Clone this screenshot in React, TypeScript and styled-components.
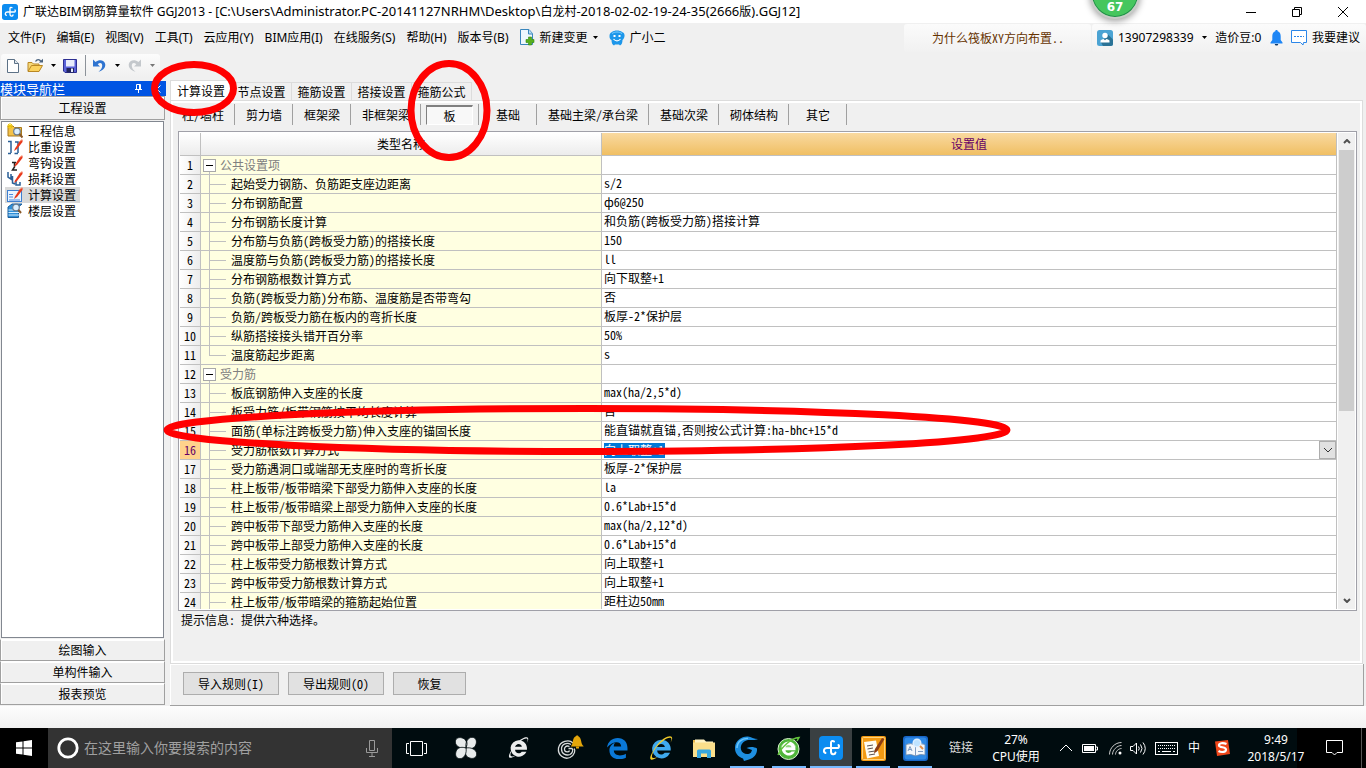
import React from "react";
import styled, { createGlobalStyle, css } from "styled-components";

const SONG = `"Noto Sans Mono CJK SC", "Noto Sans CJK SC", sans-serif`;
const UI = `"Noto Sans", "Noto Sans CJK SC", sans-serif`;

const GlobalStyle = createGlobalStyle`
  *, *::before, *::after { box-sizing: border-box; }
  html, body { margin: 0; padding: 0; background: #f0f0f0; }
  body { overflow: hidden; font-family: ${SONG}; font-size: 12px; line-height: 16px; color: #000; }
  button, input { font: inherit; color: inherit; margin: 0; }
  svg { display: block; flex: none; }
`;

const App_ = styled.div`
  position: relative;
  display: flex;
  flex-direction: column;
  height: 100vh;
  overflow: hidden;
`;

/* ---------- title bar ---------- */
const TitleBar = styled.header`
  display: flex;
  align-items: center;
  height: 23px;
  flex: none;
  padding-left: 2px;
  background: #fff;
  font-family: ${UI};
`;
const Title = styled.h1`
  margin: 0 auto 0 5px;
  font-size: 12px;
  font-weight: 400;
  line-height: 18px;
  white-space: nowrap;
`;
const Path = styled.span`
  font-size: 13px;
`;
const WindowButton = styled.button`
  display: flex;
  align-items: center;
  justify-content: center;
  width: 46px;
  height: 20px;
  padding: 0;
  border: 0;
  background: none;
`;

/* ---------- menu bar ---------- */
const MenuBar = styled.nav`
  display: flex;
  align-items: center;
  height: 29px;
  flex: none;
  font-family: ${UI};
  white-space: nowrap;
`;
const MenuList = styled.div`
  display: flex;
  align-items: center;
  gap: 11px;
  padding-left: 8px;
  margin-right: auto;
`;
const MenuButton = styled.button`
  display: flex;
  align-items: center;
  gap: 5px;
  padding: 0;
  border: 0;
  background: none;
  line-height: 18px;
`;
const SoftStrip = styled.div<{ $width: number }>`
  display: flex;
  align-items: center;
  width: ${(p) => p.$width}px;
  height: 28px;
  margin-left: 1px;
  border-radius: 3px;
  background: linear-gradient(#fbfbfb, #f1f1f1);
`;
const TipLink = styled.a`
  padding-left: 28px;
  font-family: ${SONG};
  color: #663300;
  text-decoration: none;
`;
const AccountStrip = styled(SoftStrip)`
  justify-content: space-between;
  padding: 0 6px 0 5px;
`;

/* ---------- tool bar ---------- */
const ToolRow = styled.div`
  display: flex;
  height: 29px;
  flex: none;
  padding: 2px 0 4px 1px;
`;
const ToolBar = styled.div`
  display: flex;
  align-items: center;
  width: 159px;
  padding-left: 4px;
  border-radius: 3px;
  background: linear-gradient(#fcfcfc, #f0f0f0);
`;
const ToolButton = styled.button<{ $width: number }>`
  display: flex;
  align-items: center;
  justify-content: center;
  flex: none;
  width: ${(p) => p.$width}px;
  height: 22px;
  padding: 0;
  border: 0;
  background: none;
`;
const ToolDivider = styled.span`
  width: 1px;
  height: 21px;
  flex: none;
  margin: 0 3px 0 1px;
  background: #8c9299;
`;

/* ---------- body ---------- */
const Body = styled.main`
  display: flex;
  flex: 1;
  min-height: 0;
`;
const Side = styled.aside`
  display: flex;
  flex-direction: column;
  width: 166px;
  flex: none;
  padding-bottom: 1px;
`;
const SideHeader = styled.div`
  display: flex;
  align-items: center;
  height: 15px;
  flex: none;
  background: #0054e3;
  color: #fff;
  gap: 14px;
  padding-right: 5px;
`;
const SideTitle = styled.h2`
  margin: 0 auto 0 0;
  font-size: 13px;
  font-weight: 400;
  line-height: 15px;
`;
const SideButton = styled.button<{ $tall?: boolean }>`
  width: 165px;
  height: ${(p) => (p.$tall ? 24 : 22)}px;
  flex: none;
  padding: 0;
  border: 1px solid #a0a0a0;
  border-top-color: ${(p) => (p.$tall ? "#a0a0a0" : "#fff")};
  background: #f0f0f0;
  box-shadow: inset 1px 1px 0 #fff;
  line-height: 18px;
`;
const Tree = styled.ul`
  flex: 1;
  min-height: 0;
  width: 163px;
  margin: 1px 0 1px 1px;
  padding: 1px 3px;
  border: 1px solid #828790;
  background: #fff;
  list-style: none;
`;
const TreeItem = styled.li<{ $active?: boolean }>`
  display: flex;
  align-items: center;
  gap: 5px;
  width: 75px;
  height: 16px;
  padding-left: 2px;
  background: ${(p) => (p.$active ? "#d9d9d9" : "none")};
  white-space: nowrap;
`;

const Content = styled.section`
  display: flex;
  flex-direction: column;
  flex: 1;
  min-width: 0;
  margin: 0 2px 0 4px;
`;
const Tabs = styled.div`
  display: flex;
  align-items: flex-end;
  height: 19px;
  flex: none;
`;
const Tab = styled.button<{ $active?: boolean }>`
  width: 60px;
  height: 18px;
  padding: 0;
  border: solid #dcdcdc;
  border-width: 1px 1px 0 0;
  background: #f0f0f0;
  line-height: 17px;
  white-space: nowrap;
  ${(p) =>
    p.$active &&
    css`
      width: 62px;
      height: 20px;
      border-left-width: 1px;
      background: #fff;
    `}
`;
const Pane = styled.div`
  display: flex;
  flex-direction: column;
  flex: 1;
  min-height: 0;
  margin-right: 1px;
  padding: 3px 5px 0 7px;
  border: 1px solid #dcdcdc;
  box-shadow: inset 0 0 0 2px #fff;
`;
const SubTabs = styled.div`
  display: flex;
  height: 21px;
  flex: none;
  margin: 0 0 6px -7px;
`;
const SubTab = styled.button<{ $active?: boolean }>`
  min-width: 58px;
  padding: 0 10px 0 11px;
  border: 0;
  border-right: 1px solid #a0a0a0;
  background: none;
  white-space: nowrap;
  line-height: 20px;
  ${(p) =>
    p.$active &&
    css`
      padding: 0 5px;
    `}
`;
const Pressed = styled.span`
  display: block;
  height: 20px;
  border: 1px solid #fff;
  border-top: 2px solid #808080;
  border-left-color: #808080;
  background: #f8f8f8;
  line-height: 17px;
`;

/* ---------- grid ---------- */
const Grid = styled.div`
  display: flex;
  flex: 1;
  min-height: 0;
  padding: 1px;
  gap: 1px;
  border: 1px solid #a0a0a8;
  background: #fff;
  overflow: hidden;
`;
const TableClip = styled.div`
  flex: 1;
  min-width: 0;
  overflow: hidden;
`;
const Table = styled.table`
  width: 100%;
  table-layout: fixed;
  border-collapse: separate;
  border-spacing: 0;
`;
const HeadCell = styled.th<{ $hot?: boolean }>`
  height: 23px;
  padding: 0;
  border: solid #c0c0c0;
  border-width: 0 1px 1px 0;
  background: ${(p) => (p.$hot ? "linear-gradient(#f9d9a0, #f0bf63)" : "linear-gradient(#fff, #ececec)")};
  color: ${(p) => (p.$hot ? "#660066" : "#000")};
  font-weight: 400;
`;
const cell = css`
  height: 19px;
  padding: 0;
  border: solid #c0c0c0;
  border-width: 0 1px 1px 0;
  line-height: 18px;
  white-space: nowrap;
`;
const NumCell = styled.th<{ $hot?: boolean }>`
  ${cell}
  background: ${(p) => (p.$hot ? "#ffd28c" : "linear-gradient(90deg, #fff, #ececec)")};
  color: ${(p) => (p.$hot ? "#660066" : "#000")};
  font-weight: 400;
  text-align: center;
`;
const NameCell = styled.td<{ $group?: boolean }>`
  ${cell}
  background: #ffffe1;
  ${(p) =>
    p.$group &&
    css`
      color: #808080;
      background: linear-gradient(#c0c0c0, #c0c0c0) 8px 100% / 1px 5px no-repeat #ffffe1;
    `}
`;
const NameRow = styled.div`
  display: flex;
  align-items: center;
  height: 18px;
  padding-left: 2px;
  gap: 4px;
`;
const Expander = styled.button`
  display: flex;
  align-items: center;
  justify-content: center;
  width: 13px;
  height: 13px;
  padding: 0;
  border: 1px solid #a8a8a8;
  background: #fff;
`;
const Branch = styled.span<{ $last?: boolean }>`
  width: 17px;
  height: 18px;
  margin: 0 1px 0 6px;
  background:
    linear-gradient(#c0c0c0, #c0c0c0) 0 0 / 1px ${(p) => (p.$last ? "9px" : "18px")} no-repeat,
    linear-gradient(#c0c0c0, #c0c0c0) 0 9px / 17px 1px no-repeat;
`;
const ValueCell = styled.td`
  ${cell}
  padding-left: 2px;
  line-height: 16px;
  vertical-align: top;
`;
const Editor = styled.div`
  display: flex;
  align-items: center;
  justify-content: space-between;
  height: 18px;
`;
const EditorInput = styled.input`
  width: 61px;
  height: 15px;
  padding: 0;
  border: 0;
  background: #0078d7;
  color: #fff;
`;
const DropButton = styled.button`
  display: flex;
  align-items: center;
  justify-content: center;
  width: 17px;
  height: 18px;
  padding: 0;
  border: 1px solid #adadad;
  background: #e1e1e1;
`;
const ScrollBar = styled.div`
  display: flex;
  flex-direction: column;
  align-items: center;
  width: 17px;
  flex: none;
  background: #f0f0f0;
`;
const ScrollButton = styled.button`
  display: flex;
  align-items: center;
  justify-content: center;
  width: 17px;
  height: 17px;
  padding: 0;
  border: 0;
  background: none;
`;
const ScrollTrack = styled.div`
  flex: 1;
  width: 15px;
`;
const ScrollThumb = styled.div`
  height: 59%;
  background: #cdcdcd;
`;
const Hint = styled.p`
  height: 52px;
  flex: none;
  margin: 0;
  padding: 0 3px;
  line-height: 18px;
`;
const Actions = styled.div`
  display: flex;
  gap: 9px;
  height: 42px;
  flex: none;
  padding: 8px 13px;
  border: solid #a0a0a0;
  border-width: 0 1px 1px 0;
  box-shadow: inset 1px 1px 0 #fff;
`;
const ActionButton = styled.button`
  min-width: 73px;
  height: 23px;
  padding: 0 14px;
  border: 1px solid #adadad;
  background: #e1e1e1;
  line-height: 20px;
  white-space: nowrap;
`;
const StatusBar = styled.footer`
  height: 22px;
  flex: none;
  background: linear-gradient(#fdfdfd, #f1f1f1);
`;

/* ---------- task bar ---------- */
const TaskBar = styled.div`
  display: flex;
  height: 40px;
  flex: none;
  background: linear-gradient(90deg, #000c0f calc(100% - 69px), #000 calc(100% - 69px));
  color: #fff;
  font-family: ${UI};
  white-space: nowrap;
`;
const Start = styled.button`
  display: flex;
  align-items: center;
  justify-content: center;
  width: 48px;
  padding: 0;
  border: 0;
  background: #000;
`;
const Search = styled.label`
  display: flex;
  align-items: center;
  width: 344px;
  padding: 0 14px 0 9px;
  gap: 5px;
  background: #333;
`;
const SearchInput = styled.input`
  flex: 1;
  min-width: 0;
  padding: 0;
  border: 0;
  background: none;
  font-size: 14px;
  &::placeholder {
    color: #a0a0a0;
    opacity: 1;
  }
`;
const Task = styled.button<{ $width: number; $running?: boolean; $active?: boolean }>`
  display: flex;
  align-items: center;
  justify-content: center;
  width: ${(p) => p.$width}px;
  padding: 0;
  border: 0;
  background: none;
  ${(p) =>
    p.$running &&
    css`
      background: linear-gradient(#76b9ff, #76b9ff) center bottom / ${p.$active ? "100%" : "34px"} 2px no-repeat
        ${p.$active ? "#3a4042" : "transparent"};
    `}
`;
const Tray = styled.div`
  display: flex;
  align-items: center;
  margin-left: auto;
`;
const LinkBand = styled.span`
  width: 33px;
  color: #ddd;
`;
const TwoLines = styled.div<{ $width: number }>`
  width: ${(p) => p.$width}px;
  line-height: 17px;
  text-align: center;
`;
const TrayButton = styled.button<{ $width: number }>`
  display: flex;
  align-items: center;
  justify-content: center;
  width: ${(p) => p.$width}px;
  height: 40px;
  padding: 0;
  border: 0;
  background: none;
`;
const ShowDesktop = styled.span`
  width: 5px;
  height: 40px;
  border-left: 1px solid #555;
`;

/* ---------- overlays ---------- */
const Gauge = styled.div`
  position: absolute;
  top: -31px;
  right: 226px;
  width: 50px;
  height: 50px;
  border: 2px solid #c8ccc8;
  border-radius: 50%;
  background: #45c65e;
  box-shadow: inset 0 0 0 1px #1f8a48, 0 2px 7px rgba(0, 0, 0, 0.4);
  color: #fff;
  font: 700 12px/14px "DejaVu Sans", sans-serif;
  text-align: center;
  padding-top: 29px;
`;
const Marks = styled.svg`
  position: absolute;
  left: 0;
  top: 0;
  pointer-events: none;
`;

/* ---------- icons ---------- */
const Caret = ({ color = "#000" }: { color?: string }) => (
  <svg width="5" height="3"><path d="M0 0H5L2.500 3Z" fill={color} /></svg>
);

const BrandIcon = ({ size }: { size: number }) => (
  <svg width={size} height={size} viewBox="0 0 24 24">
    <rect width="24" height="24" rx="4" fill="#0c8cf0" />
    <g fill="none" stroke="#fff" strokeWidth="2" strokeLinecap="round">
      <path d="M12 6.500V15.500C12 19 16 19 16.500 16.500M12 6.500C12 5 14 4.500 15 5.500" />
      <path d="M18.500 12H8C4.500 12 4 16 6.500 17M18.500 12C20 12 20.500 10 19.500 9" />
    </g>
  </svg>
);

const NewChangeIcon = () => (
  <svg width="15" height="17" viewBox="0 0 15 17">
    <path d="M.5.5H9L12.500 4.500V15.500H.5Z" fill="#eef7fd" stroke="#3a86bd" />
    <path d="M8.500.5V5H12.500" fill="#b9dcf2" stroke="#3a86bd" />
    <path d="M8.500 8h3v2.500H14v3h-2.500V16h-3v-2.500H6v-3h2.500Z" fill="#57b01c" stroke="#2f8a0d" strokeWidth=".6" />
  </svg>
);
const MascotIcon = () => (
  <svg width="16" height="16" viewBox="0 0 16 16">
    <path d="M3 2C5 0 11 0 13 2c3 1 3 4 2 6-.5 1-1 1.500-1.500 2 0 3-1 5-2.500 5.500l-1-1h-4l-1 1c-1.500-.5-2.500-2.500-2.500-5.500C1 9.500.500 8 .500 6 .500 4 1 3 3 2Z" fill="#1d97ea" />
    <path d="M3 3.500C6 1.500 10 1.500 13 3.500" stroke="#7fd0ff" fill="none" />
    <rect x="4.500" y="5" width="2" height="2" fill="#fff" /><rect x="9.500" y="5" width="2" height="2" fill="#fff" />
    <path d="M4.500 9c2 2.500 5 2.500 7 0" stroke="#fff" fill="none" strokeWidth="1.200" />
  </svg>
);
const UserIcon = () => (
  <svg width="16" height="16" viewBox="0 0 16 16">
    <rect width="16" height="16" rx="2.500" fill="#4ba3d3" />
    <path d="M11 4.500 16 9.500V13.500q0 2.500-2.500 2.500H6L4 12.500Z" fill="#2b7396" />
    <circle cx="8" cy="5.500" r="2.700" fill="#fff" />
    <path d="M3.500 12.500V10.500Q5 9 6.500 9L8 10.300 9.500 9Q11 9 12.500 10.500V12.500Z" fill="#fff" />
  </svg>
);
const BellIcon = () => (
  <svg width="13" height="16" viewBox="0 0 13 16">
    <path d="M6.500 0c.8 0 1.200.5 1.200 1.200C10 2 10.700 4 10.700 6.500V10L12.500 12.500V13.500H.5V12.500L2.300 10V6.500C2.300 4 3 2 5.300 1.200 5.300.5 5.700 0 6.500 0Z" fill="#1e86f5" />
    <path d="M4.800 14H8.200C8.200 16 4.800 16 4.800 14Z" fill="#123a66" />
  </svg>
);
const ChatIcon = () => (
  <svg width="16" height="16" viewBox="0 0 16 16">
    <path d="M.5.5H15.500V12.500H12.500L12 15 9.500 12.500H.5Z" fill="#fff" stroke="#2b86e8" />
    <path d="M3 6.500H13" stroke="#2b86e8" strokeDasharray="2 1" />
  </svg>
);

const NewFileIcon = () => (
  <svg width="12" height="14" viewBox="0 0 12 14">
    <path d="M.5.5H7.500L11.500 4.500V13.500H.5Z" fill="#fff" stroke="#5c7186" />
    <path d="M7.500.5V4.500H11.500" fill="#dfe7ee" stroke="#5c7186" />
  </svg>
);
const OpenIcon = () => (
  <svg width="17" height="15" viewBox="0 0 17 15">
    <path d="M1 13V4.500H5L6.500 6H12V8" fill="#f6d878" stroke="#b98723" />
    <path d="M1 13.500 4.500 7.500H15.500L12 13.500Z" fill="#fbd25e" stroke="#b98723" />
    <path d="M8.500 3.500C10 1 12.500 1 14 3.500" fill="none" stroke="#49627e" strokeWidth="1.400" />
    <path d="M11.800 4.500H16V.8Z" fill="#49627e" />
  </svg>
);
const SaveIcon = () => (
  <svg width="14" height="14" viewBox="0 0 14 14">
    <path d="M.5.5H13.500V13.500H2L.5 12Z" fill="#5a62d8" stroke="#2d2f91" />
    <rect x="3" y="1" width="8.500" height="6.500" fill="#e8ecfb" />
    <rect x="3.500" y="9" width="7.500" height="4.500" fill="#20235c" />
    <rect x="8" y="9.500" width="2" height="3.500" fill="#e8ecfb" />
  </svg>
);
const UndoIcon = ({ color, flip }: { color: string; flip?: boolean }) => (
  <svg width="13" height="13" viewBox="0 0 13 13">
    <g transform={flip ? "translate(13 0) scale(-1 1)" : undefined}>
      <path d="M0 .5V7.500H7L4.700 5.200C7 3 9.500 4 9.200 7 9 9.500 7.500 11 5.500 12.800 10 11.500 12.800 8.500 12.200 5 11.500.800 6 0 2.600 3Z" fill={color} />
    </g>
  </svg>
);

const Pencil = () => (
  <g>
    <path d="M8 9.500 12.500 2.500 15.500.5 15.500 3 10 10 7 12Z" fill="#e8391c" />
    <path d="M12.500 2.500 15 .5" stroke="#ff9d7a" />
  </g>
);
const TreeIcon = ({ kind }: { kind: number }) => (
  <svg width="16" height="16" viewBox="0 0 16 16">
    {kind === 0 && (
      <g>
        <path d="M1 3H6L7.500 4.500H14.500V13H1Z" fill="#f3c24a" stroke="#a9791b" />
        <path d="M3 0V6M0 3H6M1 1 5 5M5 1 1 5" stroke="#f0c800" />
        <circle cx="10" cy="8.500" r="3.300" fill="#dbefff" stroke="#6b7c90" strokeWidth="1.200" />
        <path d="M12.500 11 15.500 14.500" stroke="#8a5a2a" strokeWidth="2" />
      </g>
    )}
    {kind === 1 && (
      <g><path d="M1 2.500H4V14M1 14.500H4M8 3H11V14M7.500 14.500H11" stroke="#2a5f96" strokeWidth="1.500" fill="none" /><Pencil /></g>
    )}
    {kind === 2 && (
      <g><path d="M5 7.500H9M7.500 7.500V12L5.500 15H10" stroke="#222" strokeWidth="1.500" fill="none" /><Pencil /></g>
    )}
    {kind === 3 && (
      <g><path d="M1 1V6L4 8V3M5.500 5V12L8 13M9 9V14H13V11" stroke="#2a5f96" strokeWidth="1.500" fill="none" /><Pencil /></g>
    )}
    {kind === 4 && (
      <g>
        <rect x=".5" y="3.500" width="14" height="11" fill="#eaf4ff" stroke="#3f7fd0" />
        <path d="M2 7.500H6M2 10H6M2 13H13" stroke="#4d8be0" /><Pencil />
      </g>
    )}
    {kind === 5 && (
      <g>
        <path d="M1 4 5 1H15L11.500 4V14.500H1Z" fill="#2f8fd8" stroke="#1c5f9c" />
        <path d="M1.500 7H11M1.500 9.500H12M1.500 12H13" stroke="#d8efff" />
        <circle cx="9" cy="4.500" r="3.300" fill="#dbefff" stroke="#6b7c90" strokeWidth="1.200" />
        <path d="M11.500 7 14 10" stroke="#8a5a2a" strokeWidth="2" />
      </g>
    )}
  </svg>
);

const Chevron = ({ up, w = 8, stroke = "#505050", sw = 2 }: { up?: boolean; w?: number; stroke?: string; sw?: number }) => (
  <svg width={w + 2} height={w / 2 + 2} viewBox={`0 0 ${w + 2} ${w / 2 + 2}`}>
    <path d={up ? `M1 ${w / 2 + 1}L${w / 2 + 1} 1L${w + 1} ${w / 2 + 1}` : `M1 1L${w / 2 + 1} ${w / 2 + 1}L${w + 1} 1`} fill="none" stroke={stroke} strokeWidth={sw} />
  </svg>
);

const EdgeShape = ({ fill, w = 21 }: { fill: string; w?: number }) => (
  <svg width={w} height={w} viewBox="0 0 20 20">
    <path d="M0 9C.8 3.500 4.800 0 10.200 0 16 0 19.500 4 19.500 9.500V12H6.500C6.800 17.500 14 17.500 18 15V18.800C12 21.800 2.500 20.500 2.300 12 2.200 8.500 4.500 5.800 7.500 4.600 6.800 5.600 6.500 6.800 6.400 8H13.500C13.500 2.500 5.500 2.500 0 9Z" fill={fill} />
  </svg>
);
const RingE = ({ body, ring, w = 23 }: { body: string; ring: string; w?: number }) => (
  <svg width={w} height={w} viewBox="0 0 24 24">
    <path d="M12.500 3.500A9 9 0 1 0 21.200 16H16C14.200 18.800 8.800 18.200 8.800 14H21.800C22.400 7.800 18.300 3.500 12.500 3.500ZM8.800 10.600C9.500 6.800 15.800 6.800 16.200 10.600Z" fill={body} fillRule="evenodd" />
    <path d="M4.500 15C-.5 23.500 3 24.500 9 20.500 2 23 2.500 18.500 7.500 11.500 12 5.500 20 0 22 2c.8.8.5 2.500-.5 4.500C24.500 2 23.500-1 18.500.8 13 3 8 8.500 4.500 15Z" fill={ring} />
  </svg>
);

const TaskIcon = ({ name }: { name: string }) => {
  switch (name) {
    case "view":
      return (
        <svg width="21" height="15" viewBox="0 0 21 15">
          <path d="M4.500.5H16.500V14.500H4.500ZM3 2.500H.5V12.500H3M18 2.500H20.500V12.500H18" fill="none" stroke="#fff" />
        </svg>
      );
    case "flower":
      return (
        <svg width="22" height="22" viewBox="0 0 22 22">
          {[0, 90, 180, 270].map((a) => (
            <path
              key={a}
              transform={`rotate(${a} 11 11)`}
              d="M11 11C6 12 .5 9.500 .3 5 .3 1.500 3.500 0 6.500 .8 10.500 1.500 13 5 11 11Z"
              fill="#e8ecec"
              stroke="#000c0f"
              strokeWidth=".8"
            />
          ))}
          <path d="M11 11C13 6 11.500 3 9.500 1.500" fill="none" stroke="#000c0f" />
        </svg>
      );
    case "e":
      return <RingE body="#eceeee" ring="#eceeee" w={22} />;
    case "swirl":
      return (
        <svg width="28" height="26" viewBox="0 0 28 26">
          <g fill="none" stroke="#d8dcdc" strokeWidth="1.300">
            <path d="M17 8C13 4 4 6 2.500 13 1.500 20 8 25 14 22.500 19 20 19.500 15 18 13.500" />
            <path d="M15 9.500C11 7 5.500 9 5.500 14 5.500 19 10 21 14 19.500 16.500 18 17.500 15 16 13.500H12.500" />
            <path d="M13.500 11.500C10 10 8 12.500 8.500 15 9 17.500 13 17.500 13.500 15.500" />
          </g>
          <path d="M15 11C17 9.500 16.500 5 18 2.700 19 1.500 20 1.500 20.500.5H22C22 1.500 23 1.500 24 2.700 25.500 5 25 9 27.500 11V11.500H15Z" fill="#e3a60a" />
          <rect x="20" y="11.500" width="3" height="2" fill="#e3a60a" />
        </svg>
      );
    case "edge":
      return <EdgeShape fill="#0a78d7" />;
    case "ie":
      return <RingE body="#3fa9ee" ring="#f2cd2a" w={25} />;
    case "folder":
      return (
        <svg width="22" height="19" viewBox="0 0 22 19">
          <path d="M0 1H7L9 3V18H0Z" fill="#e9b64b" /><path d="M2 .5H11L13 2.500H20V6H2Z" fill="#fff3c4" />
          <rect y="3.500" width="22" height="14.500" fill="#fbdf8b" />
          <path d="M4 19V12Q4 10.500 5.500 10.500H16.500Q18 10.500 18 12V19H14V14.500H8V19Z" fill="#38a7e0" />
        </svg>
      );
    case "g":
      return (
        <svg width="25" height="25" viewBox="0 0 25 25">
          <path d="M24 3C20 5 17 3.500 14 4 9 5 6 9 7 13.500 8 18 14 19.500 17 16.500L18 14 12.500 12C16 10.500 20 10.500 23 12.500 23.500 18 20 22 15 23.500L10 25 9 22.500C4 21 .5 16.500 1 11 1.500 4.500 8 0 14 .5 17 1 20 3 24 3Z" fill="#1e8fe0" />
          <path d="M3 12C3 6 8 2 14 2.500" fill="none" stroke="#6cc6fa" strokeWidth="1.500" />
        </svg>
      );
    case "green":
      return (
        <svg width="24" height="25" viewBox="0 0 24 25">
          <circle cx="11.500" cy="13" r="10.500" fill="#4fb53a" stroke="#d9f2cf" />
          <path d="M3.500 11.500C5 4 18 4 19.500 11.500Z" fill="#d9f5c8" opacity=".5" />
          <path d="M11.500 5.500A7 7 0 1 0 18 15.500H14.500C12.500 18 8.500 17 8.500 14.200H18.500C18.800 9 16 5.500 11.500 5.500ZM8.500 11.300C9 8.300 14 8.300 14.500 11.300Z" fill="#fff" fillRule="evenodd" />
          <path d="M1 19C4 12 14 2 22 1.500L20 5" fill="none" stroke="#62c43c" strokeWidth="1.500" />
        </svg>
      );
    case "brand":
      return <BrandIcon size={24} />;
    case "note":
      return (
        <svg width="25" height="25" viewBox="0 0 25 25">
          <rect width="25" height="25" rx="2" fill="#f29a12" />
          <rect x="1.500" y="1.500" width="22" height="22" rx="1" fill="none" stroke="#ffd37a" />
          <path d="M3 6 15 4.500 18 20 6 22.500Z" fill="#fffdf2" />
          <path d="M6 10 12 9M6.500 13 12 12M7.500 16 14 15M8 19 14 18" stroke="#5a5050" />
          <path d="M21 2 14 13 13 17.500 16.500 15 23.500 3Z" fill="#8c3d12" />
        </svg>
      );
    default:
      return (
        <svg width="25" height="25" viewBox="0 0 25 25">
          <rect width="25" height="25" rx="3" fill="#1867c8" />
          <rect x="1.500" y="1.500" width="22" height="22" rx="3" fill="#2f8ae6" />
          <path d="M3 8.500Q8 6.500 12.500 9 17 6.500 22 8.500V19Q17 17.500 12.500 20 8 17.500 3 19Z" fill="#f3f7fb" stroke="#6b87a8" strokeWidth=".8" />
          <path d="M12.500 9V20M5 15 7 10.500 9 15M5.800 13.500H8.300M15 15.500H20" stroke="#7f9cc2" fill="none" />
          <circle cx="14" cy="7" r="3.800" fill="#bfe3ff" stroke="#dfefff" strokeWidth="1.400" />
          <path d="M17 10 20 13" stroke="#e6904a" strokeWidth="2" />
        </svg>
      );
  }
};

/* ---------- data ---------- */
const menus = ["文件(F)", "编辑(E)", "视图(V)", "工具(T)", "云应用(Y)", "BIM应用(I)", "在线服务(S)", "帮助(H)", "版本号(B)"];
const treeItems = ["工程信息", "比重设置", "弯钩设置", "损耗设置", "计算设置", "楼层设置"];
const tabs = ["计算设置", "节点设置", "箍筋设置", "搭接设置", "箍筋公式"];
const subTabs = ["柱/墙柱", "剪力墙", "框架梁", "非框架梁", "板", "基础", "基础主梁/承台梁", "基础次梁", "砌体结构", "其它"];
const rows: [string, string?][] = [
  ["公共设置项"],
  ["起始受力钢筋、负筋距支座边距离", "s/2"],
  ["分布钢筋配置", "ф6@250"],
  ["分布钢筋长度计算", "和负筋(跨板受力筋)搭接计算"],
  ["分布筋与负筋(跨板受力筋)的搭接长度", "150"],
  ["温度筋与负筋(跨板受力筋)的搭接长度", "ll"],
  ["分布钢筋根数计算方式", "向下取整+1"],
  ["负筋(跨板受力筋)分布筋、温度筋是否带弯勾", "否"],
  ["负筋/跨板受力筋在板内的弯折长度", "板厚-2*保护层"],
  ["纵筋搭接接头错开百分率", "50%"],
  ["温度筋起步距离", "s"],
  ["受力筋"],
  ["板底钢筋伸入支座的长度", "max(ha/2,5*d)"],
  ["板受力筋/板带钢筋按平均长度计算", "否"],
  ["面筋(单标注跨板受力筋)伸入支座的锚固长度", "能直锚就直锚,否则按公式计算:ha-bhc+15*d"],
  ["受力筋根数计算方式", "向上取整+1"],
  ["受力筋遇洞口或端部无支座时的弯折长度", "板厚-2*保护层"],
  ["柱上板带/板带暗梁下部受力筋伸入支座的长度", "la"],
  ["柱上板带/板带暗梁上部受力筋伸入支座的长度", "0.6*Lab+15*d"],
  ["跨中板带下部受力筋伸入支座的长度", "max(ha/2,12*d)"],
  ["跨中板带上部受力筋伸入支座的长度", "0.6*Lab+15*d"],
  ["柱上板带受力筋根数计算方式", "向上取整+1"],
  ["跨中板带受力筋根数计算方式", "向上取整+1"],
  ["柱上板带/板带暗梁的箍筋起始位置", "距柱边50mm"],
];
const EDITED = 16;
const tasks: { name: string; label: string; width: number; running?: boolean; active?: boolean }[] = [
  { name: "view", label: "任务视图", width: 48 },
  { name: "flower", label: "应用", width: 52 },
  { name: "e", label: "浏览器", width: 52 },
  { name: "swirl", label: "提醒", width: 52 },
  { name: "edge", label: "Edge", width: 43 },
  { name: "ie", label: "Internet Explorer", width: 43 },
  { name: "folder", label: "文件资源管理器", width: 43 },
  { name: "g", label: "广联达", width: 43, running: true },
  { name: "green", label: "安全浏览器", width: 42, running: true },
  { name: "brand", label: "钢筋算量", width: 42, running: true, active: true },
  { name: "note", label: "记事", width: 42, running: true },
  { name: "book", label: "词典", width: 42, running: true },
];

export default function App() {
  return (
    <App_>
      <GlobalStyle />
      <TitleBar>
        <BrandIcon size={16} />
        <Title>
          广联达BIM钢筋算量软件 GGJ2013 - [<Path>C:\Users\Administrator.PC-20141127NRHM\Desktop\</Path>白龙村<Path>-2018-02-02-19-24-35(2666</Path>版<Path>).GGJ12]</Path>
        </Title>
        <WindowButton aria-label="最小化"><svg width="10" height="10"><path d="M0 5.500H10" stroke="#000" /></svg></WindowButton>
        <WindowButton aria-label="还原">
          <svg width="10" height="10"><path d="M.5 2.500H7.500V9.500H.5ZM2.500 2.500V.5H9.500V7.500H7.500" fill="none" stroke="#000" /></svg>
        </WindowButton>
        <WindowButton aria-label="关闭"><svg width="10" height="10"><path d="M0 0 10 10M10 0 0 10" stroke="#000" /></svg></WindowButton>
      </TitleBar>

      <MenuBar>
        <MenuList>
          {menus.map((m) => <MenuButton key={m}>{m}</MenuButton>)}
          <MenuButton><NewChangeIcon />新建变更<Caret /></MenuButton>
          <MenuButton><MascotIcon />广小二</MenuButton>
        </MenuList>
        <SoftStrip $width={187}><TipLink href="#tip">为什么筏板XY方向布置..</TipLink></SoftStrip>
        <AccountStrip $width={274}>
          <MenuButton><UserIcon />13907298339</MenuButton>
          <Caret />
          <span>造价豆:0</span>
          <BellIcon />
          <MenuButton><ChatIcon />我要建议</MenuButton>
        </AccountStrip>
      </MenuBar>

      <ToolRow>
        <ToolBar>
          <ToolButton $width={15} aria-label="新建"><NewFileIcon /></ToolButton>
          <ToolButton $width={31} aria-label="打开"><OpenIcon /></ToolButton>
          <ToolButton $width={5} aria-label="打开选项"><Caret /></ToolButton>
          <ToolButton $width={28} aria-label="保存"><SaveIcon /></ToolButton>
          <ToolDivider />
          <ToolButton $width={20} aria-label="撤销"><UndoIcon color="#2f74d0" /></ToolButton>
          <ToolButton $width={16} aria-label="撤销选项"><Caret /></ToolButton>
          <ToolButton $width={18} aria-label="重做"><UndoIcon color="#c4c8cc" flip /></ToolButton>
          <ToolButton $width={18} aria-label="重做选项"><Caret color="#777" /></ToolButton>
        </ToolBar>
      </ToolRow>

      <Body>
        <Side>
          <SideHeader>
            <SideTitle>模块导航栏</SideTitle>
            <svg width="7" height="9" viewBox="0 0 7 9"><path d="M1.500 5V.5H5.500V5M4.500 1V5M0 5.500H7M3.500 6V9" fill="none" stroke="#fff" /></svg>
            <svg width="5" height="8" viewBox="0 0 5 8"><path d="M4.500.5 1 4 4.500 7.500" fill="none" stroke="#fff" /></svg>
          </SideHeader>
          <SideButton $tall>工程设置</SideButton>
          <Tree>
            {treeItems.map((t, i) => <TreeItem key={t} $active={i === 4}><TreeIcon kind={i} />{t}</TreeItem>)}
          </Tree>
          <SideButton>绘图输入</SideButton>
          <SideButton>单构件输入</SideButton>
          <SideButton>报表预览</SideButton>
        </Side>

        <Content>
          <Tabs role="tablist">
            {tabs.map((t, i) => <Tab key={t} role="tab" aria-selected={i === 0} $active={i === 0}>{t}</Tab>)}
          </Tabs>
          <Pane>
            <SubTabs role="tablist">
              {subTabs.map((t) => (
                <SubTab key={t} role="tab" aria-selected={t === "板"} $active={t === "板"}>
                  {t === "板" ? <Pressed>{t}</Pressed> : t}
                </SubTab>
              ))}
            </SubTabs>
            <Grid>
              <TableClip>
                <Table>
                  <colgroup><col style={{ width: 21 }} /><col style={{ width: 401 }} /><col /></colgroup>
                  <thead>
                    <tr><HeadCell aria-label="序号" /><HeadCell>类型名称</HeadCell><HeadCell $hot>设置值</HeadCell></tr>
                  </thead>
                  <tbody>
                    {rows.map(([name, value], i) => {
                      const group = value === undefined;
                      const last = i < rows.length - 1 && rows[i + 1][1] === undefined;
                      return (
                        <tr key={i}>
                          <NumCell scope="row" $hot={i + 1 === EDITED}>{i + 1}</NumCell>
                          <NameCell $group={group}>
                            <NameRow>
                              {group ? (
                                <Expander aria-label="折叠"><svg width="7" height="1"><rect width="7" height="1" /></svg></Expander>
                              ) : (
                                <Branch $last={last} />
                              )}
                              {name}
                            </NameRow>
                          </NameCell>
                          <ValueCell>
                            {i + 1 === EDITED ? (
                              <Editor>
                                <EditorInput aria-label={name} defaultValue={value} />
                                <DropButton aria-label="展开选项"><Chevron sw={1} stroke="#333" /></DropButton>
                              </Editor>
                            ) : value}
                          </ValueCell>
                        </tr>
                      );
                    })}
                  </tbody>
                </Table>
              </TableClip>
              <ScrollBar>
                <ScrollButton aria-label="向上滚动"><Chevron up w={6} /></ScrollButton>
                <ScrollTrack><ScrollThumb /></ScrollTrack>
                <ScrollButton aria-label="向下滚动"><Chevron w={6} /></ScrollButton>
              </ScrollBar>
            </Grid>
            <Hint>提示信息: 提供六种选择。</Hint>
          </Pane>
          <Actions>
            <ActionButton>导入规则(I)</ActionButton>
            <ActionButton>导出规则(O)</ActionButton>
            <ActionButton>恢复</ActionButton>
          </Actions>
        </Content>
      </Body>
      <StatusBar />

      <TaskBar>
        <Start aria-label="开始">
          <svg width="16" height="16" viewBox="0 0 16 16"><path d="M0 2.300 6.500 1.400V7.500H0ZM7.500 1.200 16 0V7.500H7.500ZM0 8.500H6.500V14.600L0 13.700ZM7.500 8.500H16V16L7.500 14.800Z" fill="#fff" /></svg>
        </Start>
        <Search>
          <svg width="22" height="22"><circle cx="11" cy="11" r="9.200" fill="none" stroke="#fff" strokeWidth="2.800" /></svg>
          <SearchInput aria-label="搜索" placeholder="在这里输入你要搜索的内容" />
          <svg width="12" height="17" viewBox="0 0 12 17">
            <path d="M3.500.5H8.500V10.500H3.500ZM.5 8V12.500H11.500V8M6 12.500V16.500M3 16.500H9" fill="none" stroke="#9a9a9a" />
          </svg>
        </Search>
        {tasks.map((t) => (
          <Task key={t.name} aria-label={t.label} $width={t.width} $running={t.running} $active={t.active}><TaskIcon name={t.name} /></Task>
        ))}
        <Tray>
          <LinkBand>链接</LinkBand>
          <TwoLines $width={68}>27%<br />CPU使用</TwoLines>
          <TrayButton $width={32} aria-label="显示隐藏的图标"><Chevron up w={12} stroke="#fff" sw={1} /></TrayButton>
          <TrayButton $width={16} aria-label="电池">
            <svg width="16" height="9" viewBox="0 0 16 9"><path d="M.5.5H13.500V8.500H.5ZM14 3H15.500V6H14" fill="none" stroke="#fff" /><rect x="2" y="2" width="10" height="5" fill="#fff" /></svg>
          </TrayButton>
          <TrayButton $width={34} aria-label="网络">
            <svg width="13" height="13" viewBox="0 0 13 13">
              <g fill="none" stroke="#ccc"><path d="M.5 12.500C.5 6 6 .5 12.500.5M3.500 12.500C3.500 8 8 3.500 12.500 3.500M6.500 12.500C6.500 9.500 9.500 6.500 12.500 6.500" /></g>
              <circle cx="11" cy="11" r="1.500" fill="#fff" />
            </svg>
          </TrayButton>
          <TrayButton $width={12} aria-label="音量">
            <svg width="17" height="13" viewBox="0 0 17 13"><path d="M.5 4.500H3L6.500 1V12L3 8.500H.5ZM8.500 4.500Q10 6.500 8.500 8.500M10.500 2.500Q13.500 6.500 10.500 10.500M13 .5Q17.500 6.500 13 12.500" fill="none" stroke="#fff" /></svg>
          </TrayButton>
          <TrayButton $width={44} aria-label="键盘">
            <svg width="23" height="13" viewBox="0 0 23 13"><rect x=".5" y=".5" width="22" height="12" fill="none" stroke="#fff" /><path d="M3 3.500H20M3 6.500H20" stroke="#fff" strokeDasharray="1 1" /><path d="M3 9.500H5M7 9.500H16M18 9.500H20" stroke="#fff" /></svg>
          </TrayButton>
          <TrayButton $width={12} aria-label="输入法">中</TrayButton>
          <TrayButton $width={44} aria-label="搜狗输入法">
            <svg width="16" height="16" viewBox="0 0 16 16"><path d="M1 1.500 14 0 16 14 3 16Z" fill="#f0471a" /><path d="M12.500 4C9 2.500 4.500 3 5 5.500 5.500 8 12 6.500 12 9.500 12 12.500 7 12.500 4.500 11" fill="none" stroke="#fff" strokeWidth="2.200" /></svg>
          </TrayButton>
          <TwoLines $width={64}>9:49<br />2018/5/17</TwoLines>
          <TrayButton $width={53} aria-label="通知"><svg width="17" height="16" viewBox="0 0 17 16"><path d="M.5.5H16.500V12.500H11L8.500 15 6 12.500H.5Z" fill="none" stroke="#fff" /></svg></TrayButton>
          <ShowDesktop />
        </Tray>
      </TaskBar>

      <Gauge>67</Gauge>
      <Marks width="1020" height="480" aria-hidden="true">
        <g fill="none" stroke="#f00" strokeWidth="7">
          <ellipse cx="194" cy="88.500" rx="39.500" ry="24" />
          <ellipse cx="449" cy="110.500" rx="38" ry="47" />
          <ellipse cx="587" cy="430" rx="420" ry="21.500" />
        </g>
      </Marks>
    </App_>
  );
}
